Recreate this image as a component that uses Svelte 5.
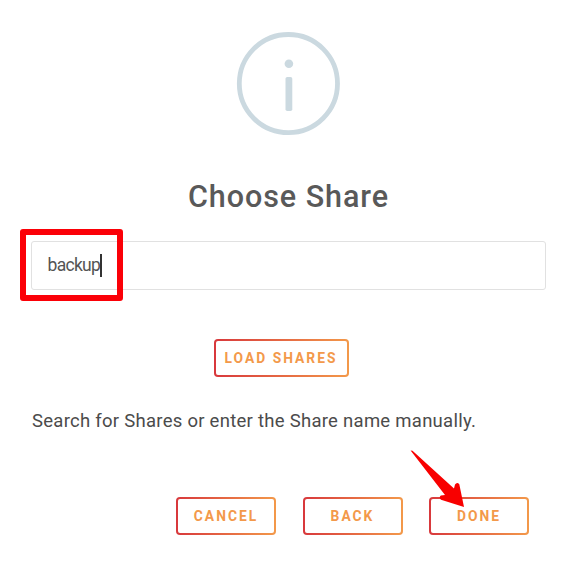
<script>
  const actions = ['CANCEL', 'BACK', 'DONE'];
  let share = $state('backup');
</script>

<main class="dialog">
  <svg class="info" width="104" height="104" viewBox="0 0 104 104" aria-hidden="true">
    <circle cx="52.4" cy="51.6" r="49.1" fill="none" stroke="#cbd9e0" stroke-width="4.8" />
    <circle cx="52.9" cy="31.7" r="4.3" fill="#cbd9e0" />
    <rect x="49.5" y="45" width="6.8" height="34" rx="1.8" fill="#cbd9e0" />
  </svg>

  <h1><span>Choose Share</span></h1>

  <div class="field">
    <span class="value">{share}</span><i class="caret"></i>
    <div class="highlight"></div>
  </div>

  <button class="outline load"><span>LOAD SHARES</span></button>

  <p><span>Search for Shares or enter the Share name manually.</span></p>

  <div class="actions">
    {#each actions as label}
      <button class="outline"><span>{label}</span></button>
    {/each}
    <svg class="arrow" width="56" height="60" viewBox="0 0 56 60" aria-hidden="true">
      <path d="M0.6 0.5 L2.5 0.7 L44 38.5 L45 34.5 Q47 31.5 49.3 34.2 L54 57 L31 49.8 Q28.6 47.5 30.8 45.5 L35 45 Z" fill="#f80000" />
    </svg>
  </div>
</main>

<style>
  :global(body) {
    background: #fff;
  }
  .dialog {
    box-sizing: border-box;
    width: 587px;
    height: 572px;
    padding: 32px 42px 0 31px;
    display: flex;
    flex-direction: column;
    align-items: center;
    overflow: hidden;
    background: #fff;
    color: #545454;
    font-family: Roboto, "Noto Sans", sans-serif;
    white-space: nowrap;
  }
  .info {
    flex: none;
    display: block;
  }
  h1 {
    margin: 41px 0 0 1px;
    height: 40px;
    font-size: 30.5px;
    font-weight: 500;
    line-height: 40px;
    letter-spacing: 0.95px;
    color: #595959;
  }
  .field {
    position: relative;
    box-sizing: border-box;
    width: 515px;
    height: 49px;
    margin-top: 24px;
    padding-left: 16px;
    display: flex;
    align-items: center;
    border: 1px solid #e1e1e1;
    border-radius: 3px;
    font-size: 17.5px;
  }
  .value {
    padding-bottom: 2px;
    letter-spacing: -0.7px;
  }
  .caret {
    width: 2px;
    height: 23px;
    background: #333;
  }
  .highlight {
    position: absolute;
    box-sizing: border-box;
    left: -12px;
    top: -13px;
    width: 103px;
    height: 72px;
    border: 6px solid #fb0007;
    border-radius: 3px;
  }
  .outline {
    box-sizing: border-box;
    width: 100px;
    height: 38px;
    padding: 0;
    display: flex;
    align-items: center;
    justify-content: center;
    border: 2px solid transparent;
    border-radius: 4px;
    background: linear-gradient(#fff, #fff) padding-box,
      linear-gradient(90deg, #d8383c, #f3994a) border-box;
    color: #f3994a;
    font-family: inherit;
    font-size: 13.8px;
    font-weight: 700;
    line-height: 18px;
    letter-spacing: 2px;
  }
  .load {
    width: 135px;
    margin: 49px 14px 0 0;
  }
  p {
    align-self: flex-start;
    margin: 30px 0 0 1px;
    height: 28px;
    font-size: 18.5px;
    line-height: 28px;
    letter-spacing: 0.27px;
    color: #4b4b4b;
  }
  .actions {
    position: relative;
    align-self: flex-end;
    display: flex;
    gap: 26.5px;
    margin: 61.5px -16px 0 0;
    padding-right: 32px;
  }
  .arrow {
    position: absolute;
    left: 234px;
    top: -47px;
  }
</style>
